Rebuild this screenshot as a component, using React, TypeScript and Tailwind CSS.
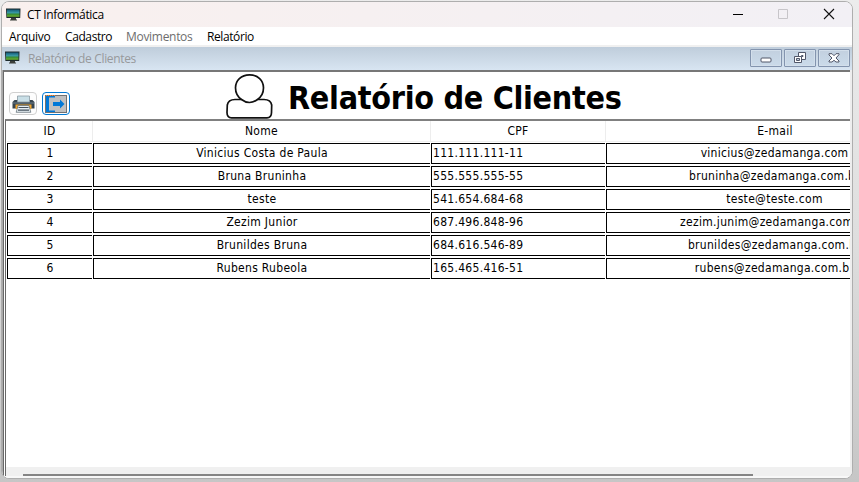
import React from "react";

const ui = "font-['Open_Sans','Noto_Sans',sans-serif]";
const tahoma = "font-['DejaVu_Sans_Condensed','DejaVu_Sans',sans-serif] [font-stretch:75%]";

const rows = [
  { id: "1", name: "Vinicius Costa de Paula", cpf: "111.111.111-11", mail: "vinicius@zedamanga.com" },
  { id: "2", name: "Bruna Bruninha", cpf: "555.555.555-55", mail: "bruninha@zedamanga.com.br" },
  { id: "3", name: "teste", cpf: "541.654.684-68", mail: "teste@teste.com" },
  { id: "4", name: "Zezim Junior", cpf: "687.496.848-96", mail: "zezim.junim@zedamanga.com.br" },
  { id: "5", name: "Brunildes Bruna", cpf: "684.616.546-89", mail: "brunildes@zedamanga.com.br" },
  { id: "6", name: "Rubens Rubeola", cpf: "165.465.416-51", mail: "rubens@zedamanga.com.br" },
];

const grid = "grid grid-cols-[85px_337px_174px_338px] gap-x-px";

function Monitor({ className }: { className: string }) {
  return (
    <svg viewBox="0 0 15 13" className={className}>
      <defs>
        <linearGradient id="screen" x1="0" y1="0" x2="0" y2="1">
          <stop offset="0" stopColor="#135a78" />
          <stop offset="0.5" stopColor="#3fa0ab" />
          <stop offset="0.6" stopColor="#2f8438" />
          <stop offset="1" stopColor="#6fb52d" />
        </linearGradient>
      </defs>
      <path d="M0 .5h14.5l-.3 9.5H.4z" fill="#1c2a2c" />
      <path d="M1 1.500h12.500v7.200H1z" fill="url(#screen)" />
      <path d="M5 10h5v1.400h1v1H4v-1h1z" fill="#3b3f3b" />
    </svg>
  );
}

function Printer() {
  return (
    <svg viewBox="0 0 23 18" className="h-[18px] w-[23px] shrink-0">
      <path d="M2.500 5h18l2 2v6.500H.5V7z" fill="#37454f" />
      <path d="M5.500 1h12v6h-12z" fill="#c9dfe7" stroke="#8b9aa3" strokeWidth=".8" />
      <path d="M1 7.500h21v1H1z" fill="#71808a" />
      <path d="M3.500 9.500h16V14h-16z" fill="#f3a72e" />
      <path d="M6 10.500h11l1.800 6.800H4.200z" fill="#e5edf1" stroke="#59656e" strokeWidth=".7" />
      <path d="M6.500 12h10v1h-10zM6 14.500h11v1.300H6z" fill="#44525e" />
    </svg>
  );
}

function ExitIcon() {
  return (
    <svg viewBox="0 0 22 18" className="h-[18px] w-[22px] shrink-0">
      <path d="M0 0h22v18H0z" fill="#c0c0c0" />
      <path d="M.5 .5h21v17H.5z" fill="none" stroke="#222" strokeDasharray="1 1" />
      <path d="M1 1h9v1.500H4v13h6V17H1z" fill="#0078d7" />
      <path d="M1 .5h10" stroke="#ff8728" strokeDasharray="1 1" />
      <path d="M8 7h7V4.500L19.500 9 15 13.500V11H8z" fill="#0078d7" />
    </svg>
  );
}

function ChildButton({ children }: { children: React.ReactNode }) {
  return (
    <div className="flex h-[18px] w-8 items-center justify-center rounded-[1px] border border-[#8394ae] bg-gradient-to-b from-[#c2d0df] to-[#cbdbea] shadow-[inset_0_0_0_1px_#d3dfeb]">
      {children}
    </div>
  );
}

export default function App() {
  return (
    <div className="h-[482px] w-[859px] overflow-hidden bg-gradient-to-b from-[#ececec] via-[#dedede] to-[#c6c6c6] pl-px pt-px">
      <div className="flex h-[478px] w-[852px] flex-col overflow-hidden rounded-lg border border-[#aeaeae] bg-white">
        <div className={`${ui} flex h-[25px] shrink-0 items-center bg-gradient-to-r from-[#f9f0ee] to-[#f2f0f5] text-[12px] text-black`}>
          <Monitor className="mb-px ml-1 h-[13px] w-[15px]" />
          <span className="ml-[6px] whitespace-nowrap tracking-[-0.35px]">CT Informática</span>
          <svg viewBox="0 0 104 12" className="mb-px ml-auto mr-[16px] h-3 w-[104px]">
            <path d="M1 6.500h10" stroke="#000" />
            <path d="M46.500 1.500h9v9h-9z" fill="none" stroke="#c7c5c9" />
            <path d="m92 1 10 10m0-10L92 11" stroke="#111" strokeWidth="1.1" />
          </svg>
        </div>
        <div className={`${ui} flex h-[18px] shrink-0 items-center pl-[7px] pt-[2px] text-[12px] text-black`}>
          <span className="w-[56px] tracking-[-0.3px]">Arquivo</span>
          <span className="w-[61px] tracking-[-0.4px]">Cadastro</span>
          <span className="w-[81px] tracking-[-0.3px] text-[#6d6d6d]">Movimentos</span>
          <span className="tracking-[-0.4px]">Relatório</span>
        </div>
        <div className="h-[2px] shrink-0 bg-[#f0f0f0]" />
        <div className={`${ui} flex h-[23px] shrink-0 items-center bg-gradient-to-b from-[#bfcddb] to-[#d8e5f2] text-[12px] text-[#97999c]`}>
          <Monitor className="mb-[2px] ml-[3px] h-[13px] w-[15px]" />
          <span className="ml-[8px] tracking-[-0.35px]">Relatório de Clientes</span>
          <div className="mb-px ml-auto mr-[2px] flex gap-[2px]">
            <ChildButton>
              <svg viewBox="0 0 12 6" className="mt-[3px] h-[6px] w-3">
                <rect x="1" y="1" width="10" height="4" rx="1" fill="#fff" stroke="#515769" />
              </svg>
            </ChildButton>
            <ChildButton>
              <svg viewBox="0 0 13 12" className="h-3 w-[13px]">
                <path d="M4.500 .5h7v7h-7z" fill="#fff" stroke="#515769" />
                <path d="M7.500 3.500h1.500v1H7.500z" fill="#c4d0dd" stroke="#515769" />
                <path d="M.5 4.500h7v6h-7z" fill="#fff" stroke="#515769" />
                <path d="M2.500 6.500h3v2h-3z" fill="#c4d0dd" stroke="#515769" />
              </svg>
            </ChildButton>
            <ChildButton>
              <svg viewBox="0 0 12 10" className="h-[10px] w-3">
                <path d="M1 .7h3l2 2 2-2h3v1L8 5l3 3v1H8L6 7.300 4 9H1V8l3-3-3-3z" fill="#fff" stroke="#515769" />
              </svg>
            </ChildButton>
          </div>
        </div>
        <div className="flex min-h-0 flex-1 border-l border-[#aaa]">
          <div className="flex min-w-0 flex-1 flex-col border-l border-t-2 border-[#696969] border-t-[#777]">
            <div className="flex h-[47px] shrink-0 items-start pl-[5px]">
              <div className="mt-[20px] flex h-[23px] w-7 shrink-0 items-center justify-center rounded-[4px] border border-[#d0d0d0] bg-[#fdfdfd]"><Printer /></div>
              <div className="ml-[5px] mt-[20px] flex h-[23px] w-7 shrink-0 items-center justify-center rounded-[4px] border border-[#0078d4] bg-[#fdfdfd]"><ExitIcon /></div>
              <svg viewBox="0 0 48 46" className="ml-[155px] mt-[1px] h-[46px] w-12 shrink-0" fill="none" stroke="#111" strokeWidth="1.700">
                <path d="M24.500 1.800c8.400 0 14 5.700 14 13 0 5-2.500 9.300-6 11.700-2.300 1.800-5 3-8 3s-5.700-1.200-8-3c-3.500-2.400-6-6.700-6-11.700 0-7.300 5.600-13 14-13z" />
                <path d="M16.500 26.500H10C5.300 26.500 3 28 2.300 32L2 39.500C2 43 3.500 44.800 6.500 44.800h35.500c3 0 4.500-1.800 4.500-5.300L46.700 32c-.7-4-3-5.500-7.700-5.500h-6.300" />
              </svg>
              <h1 className={`${tahoma} ml-[15px] mt-[6px] whitespace-nowrap text-[32px] font-bold leading-[40px] tracking-[-0.3px] text-black`}>Relatório de Clientes</h1>
            </div>
            <div className={`${tahoma} ml-px flex min-h-0 flex-1 flex-col overflow-hidden border-l border-t-2 border-[#696969] border-t-[#808080] text-[12px] tracking-[0.3px] text-black`}>
              <div className={`${grid} ml-px h-[21px] w-[937px] shrink-0 border-b border-[#f0f0f0] text-center leading-[21px]`}>
                <div className="shadow-[1px_0_0_#ededed]">ID</div>
                <div className="shadow-[1px_0_0_#ededed]">Nome</div>
                <div className="shadow-[1px_0_0_#ededed]">CPF</div>
                <div>E-mail</div>
              </div>
              <div className="ml-px mt-px flex flex-col gap-[2px]">
                {rows.map((r) => (
                  <div key={r.id} className={`${grid} h-[21px] w-[937px] text-center leading-[19px] *:border-y *:border-l *:border-black *:whitespace-nowrap`}>
                    <div>{r.id}</div>
                    <div>{r.name}</div>
                    <div className="pl-px text-left tracking-[0.29px]">{r.cpf}</div>
                    <div className="pr-[2px]">{r.mail}</div>
                  </div>
                ))}
              </div>
              <div className="mt-auto flex h-[9px] shrink-0 items-end bg-[#f0f0f0] pl-[17px]">
                <div className="h-[2px] w-[730px] bg-[#858585]" />
              </div>
            </div>
            <div className="h-[2px] shrink-0 bg-[#f8f8f8]" />
          </div>
          <div className="w-[2px] bg-[#eeeeee]" />
        </div>
      </div>
    </div>
  );
}
